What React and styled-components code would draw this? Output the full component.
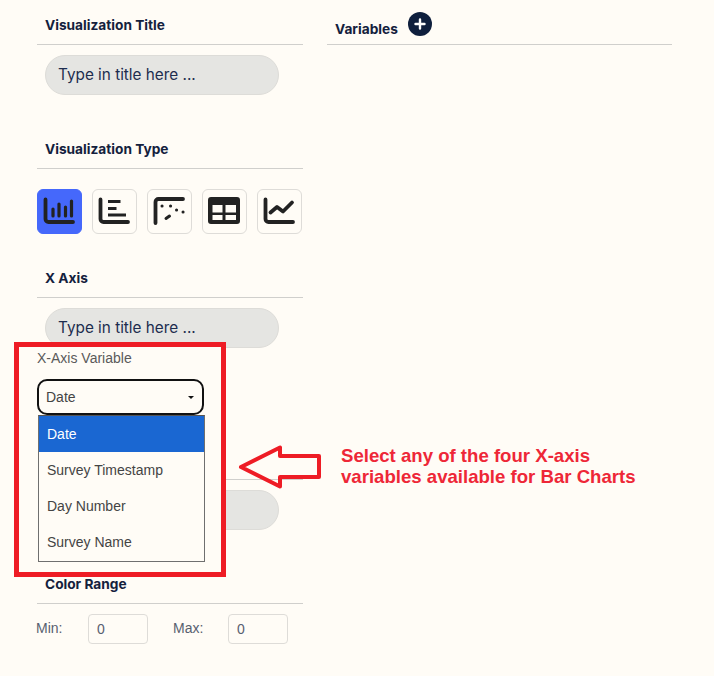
import React from "react";
import styled, { createGlobalStyle } from "styled-components";

const Global = createGlobalStyle`
  html, body { margin: 0; padding: 0; background: #fffcf6; }
  * { box-sizing: border-box; }
`;

const Page = styled.div`
  position: relative;
  width: 714px;
  height: 676px;
  overflow: hidden;
  padding-left: 37px;
  display: grid;
  grid-template-columns: 266px 345px;
  column-gap: 24px;
  align-content: start;
  align-items: start;
  font-family: "Inter", "Liberation Sans", sans-serif;
`;

const Column = styled.div`
  display: flex;
  flex-direction: column;
`;

const Section = styled.section`
  margin-bottom: ${(p) => p.$gap ?? 29}px;
`;

const Head = styled.div`
  height: 45px;
  padding: 0 0 9px 8px;
  border-bottom: 1px solid #d0cfcc;
  display: flex;
  align-items: flex-end;
  gap: 10px;
  font-size: 13.7px;
  line-height: 20px;
  font-weight: 700;
  color: #14213d;
`;

const VarHead = styled(Head)`
  padding-bottom: 5px;
`;

const PlusBadge = styled.span`
  width: 24px;
  height: 24px;
  margin-bottom: 3px;
  border-radius: 50%;
  background: #0f1f3d;
  display: flex;
  align-items: center;
  justify-content: center;
`;

const Pill = styled.input`
  display: block;
  width: 234px;
  height: 40px;
  margin: 10px 0 0 8px;
  padding: 0 12px 2px;
  border: 1px solid #dddcd8;
  border-radius: 20px;
  background: #e5e5e2;
  font: 400 15.3px "Inter", "Liberation Sans", sans-serif;
  color: #1d2d4f;
  &::placeholder { color: #1d2d4f; opacity: 1; }
`;

const IconRow = styled.div`
  display: flex;
  gap: 10px;
  margin-top: 20px;
`;

const IconButton = styled.button`
  width: 45px;
  height: 45px;
  padding: 0;
  border: 1px solid ${(p) => (p.$active ? "#4568fb" : "#dedcd8")};
  border-radius: 6px;
  background: ${(p) => (p.$active ? "#4568fb" : "transparent")};
  display: block;
  svg { display: block; margin: -1px; }
`;

const RangeRow = styled.div`
  display: flex;
  align-items: center;
  margin-top: 10px;
  width: 300px;
`;

const RangeLabel = styled.label`
  flex: none;
  width: ${(p) => p.$w}px;
  font: 400 14px "Liberation Sans", sans-serif;
  color: #586070;
  margin-top: -3px;
  text-indent: ${(p) => p.$indent ?? 0}px;
`;

const RangeInput = styled.input`
  flex: none;
  width: 60px;
  height: 30px;
  margin-right: 25px;
  padding: 0 8px;
  border: 1px solid #dedcd8;
  border-radius: 4px;
  background: transparent;
  font: 400 14px "Liberation Sans", sans-serif;
  color: #586070;
`;

const RedBox = styled.div`
  position: absolute;
  left: 14px;
  top: 342px;
  width: 212px;
  height: 235px;
  border: 5px solid #ee1c25;
  background: #fffcf6;
  padding: 3px 0 0 18px;
  font-family: "Liberation Sans", sans-serif;
`;

const FieldLabel = styled.div`
  font-size: 14px;
  line-height: 16px;
  color: #5a5a5a;
`;

const SelectBox = styled.div`
  width: 167px;
  height: 36px;
  margin-top: 13px;
  padding: 0 8px 0 7px;
  border: 2px solid #111;
  border-radius: 10px;
  display: flex;
  align-items: center;
  justify-content: space-between;
  font-size: 14px;
  color: #444;
`;

const Caret = styled.span`
  width: 0;
  height: 0;
  border-left: 3px solid transparent;
  border-right: 3px solid transparent;
  border-top: 3px solid #111;
`;

const OptionList = styled.ul`
  list-style: none;
  margin: 0 0 0 1px;
  padding: 0;
  width: 167px;
  height: 147px;
  border: 1px solid #6f6f6f;
  border-top-color: #555;
`;

const Option = styled.li`
  height: 36px;
  padding-left: 8px;
  display: flex;
  align-items: center;
  font-size: 14px;
  background: ${(p) => (p.$selected ? "#1a67d2" : "transparent")};
  color: ${(p) => (p.$selected ? "#fff" : "#444")};
`;

const ArrowMark = styled.svg`
  position: absolute;
  left: 236px;
  top: 442px;
`;

const Note = styled.div`
  position: absolute;
  left: 341px;
  top: 445px;
  font: 700 18.6px/21px "Liberation Sans", sans-serif;
  color: #ee2737;
  white-space: nowrap;
`;

const Ic = ({ children }) => (
  <svg width="45" height="45" viewBox="0 0 45 45" fill="none" stroke="#222" strokeWidth="3.8" strokeLinecap="round" strokeLinejoin="round">
    {children}
  </svg>
);

const Axis = () => <path d="M8.5 10.5V30a3 3 0 0 0 3 3H36" />;

const icons = [
  <Ic key="bar">
    <Axis />
    <path d="M16 20v7M22 15v12M28.5 18v9M34.5 12v15" strokeWidth="3.2" />
  </Ic>,
  <Ic key="hbar">
    <Axis />
    <path d="M16 12.5h12.5M16 19.5h8.5M16 26h18" strokeWidth="3.2" strokeLinecap="butt" />
  </Ic>,
  <Ic key="scatter">
    <path d="M8.5 34V13a3 3 0 0 1 3-3H36" />
    <path d="M15 17h.1M23.5 17h.1M29.5 21h.1M36 23h.1" strokeWidth="3" />
    <path d="M19 29.5l3.5-2.5" strokeWidth="3" />
  </Ic>,
  <Ic key="table">
    <path
      fill="#222"
      stroke="none"
      fillRule="evenodd"
      d="M9 8H35a3 3 0 0 1 3 3V32a3 3 0 0 1-3 3H9a3 3 0 0 1-3-3V11a3 3 0 0 1 3-3ZM10.5 16V23.5H20.5V16ZM23.5 16V23.5H34V16ZM10.5 26V31H20.5V26ZM23.5 26V31H34V26Z"
    />
  </Ic>,
  <Ic key="line">
    <Axis />
    <path d="M13.5 23.5l6.5-5.5 6 4.5 9-9" />
  </Ic>,
];

export default function App() {
  return (
    <Page>
      <Global />
      <Column>
        <Section>
          <Head>Visualization Title</Head>
          <Pill placeholder="Type in title here ..." />
        </Section>
        <Section $gap={19}>
          <Head>Visualization Type</Head>
          <IconRow>
            {icons.map((icon, i) => (
              <IconButton key={i} $active={i === 0}>{icon}</IconButton>
            ))}
          </IconRow>
        </Section>
        <Section $gap={87}>
          <Head>X Axis</Head>
          <Pill placeholder="Type in title here ..." />
        </Section>
        <Section>
          <Head />
          <Pill />
        </Section>
        <Section>
          <Head>Color Range</Head>
          <RangeRow>
            <RangeLabel $w={51} $indent={-1}>Min:</RangeLabel>
            <RangeInput defaultValue="0" />
            <RangeLabel $w={55}>Max:</RangeLabel>
            <RangeInput defaultValue="0" />
          </RangeRow>
        </Section>
      </Column>
      <Column>
        <VarHead>
          Variables
          <PlusBadge>
            <svg width="12" height="12" viewBox="0 0 12 12" fill="none" stroke="#fff" strokeWidth="2.4" strokeLinecap="round">
              <path d="M6 1.5v9M1.5 6h9" />
            </svg>
          </PlusBadge>
        </VarHead>
      </Column>

      <RedBox>
        <FieldLabel>X-Axis Variable</FieldLabel>
        <SelectBox>
          Date
          <Caret />
        </SelectBox>
        <OptionList>
          <Option $selected>Date</Option>
          <Option>Survey Timestamp</Option>
          <Option>Day Number</Option>
          <Option>Survey Name</Option>
        </OptionList>
      </RedBox>

      <ArrowMark width="90" height="50" viewBox="0 0 90 50" fill="none">
        <path d="M5 25L44 5.5V14H83V35H44V44.5Z" stroke="#ee1c25" strokeWidth="4" strokeLinejoin="round" />
      </ArrowMark>
      <Note>
        Select any of the four X-axis
        <br />
        variables available for Bar Charts
      </Note>
    </Page>
  );
}
